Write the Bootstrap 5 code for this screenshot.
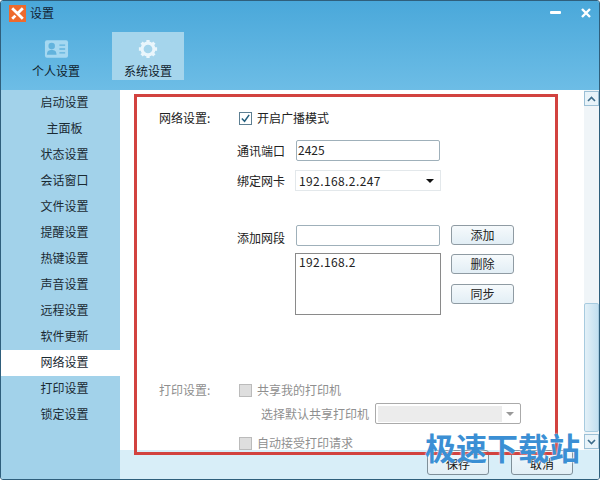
<!DOCTYPE html>
<html lang="zh">
<head>
<meta charset="utf-8">
<link href="https://cdn.jsdelivr.net/npm/bootstrap@5.3.0/dist/css/bootstrap.min.css" rel="stylesheet">
<style>
html,body{margin:0;height:480px;overflow:hidden;background:#fff}
body{font-family:"Noto Sans CJK SC","Liberation Sans",sans-serif;font-size:12px;line-height:16px;color:#222}
.win{width:600px;height:480px;border:1px solid #2f5f7c;border-radius:3px;background:#d8eef8;position:relative;overflow:hidden}
.head{height:89px;background:linear-gradient(#4aa8da,#6dbde6);flex:none}
.titlebar{height:24px;padding:0 8px;margin-bottom:7px}
.logo{width:17px;height:17px;display:block}
.wintitle{font-size:12px;color:#123}
.winbtns{gap:20px;padding-right:0}
.tabbar{padding-left:19px;gap:20px}
.tabi{width:72px;height:48px;color:#10222e;padding-top:7px}
.tabi.on{background:#a5d5ec}
.tabi svg{display:block}
.tabtxt{line-height:14px;margin-top:5px}
.bodyw{height:389px}
.side{width:119px;background:#a2d2ea;flex:none}
.sideitem{height:26px;line-height:24px;text-align:center;padding-left:8px;color:#1a2a33}
.sideitem.on{background:#fff}
.mainw{width:479px}
.pane{height:360px;background:#fff;flex:none;padding-right:15px;position:relative}
.formw{padding:20px 0 0 39px;width:462px}
.lab1{width:80px}
.lab2{width:57px;margin-left:78px;color:#222;text-align:left}
.cb{width:13px;height:13px;border:1px solid #5d7f92;background:#fff;margin-right:5px;flex:none;display:block}
.cb.dis{background:#dedede;border-color:#bbb}
.fld{border:1px solid #9fb0ba;border-radius:2px;background:#fff;height:21px;width:144px;padding:0 1px;line-height:18px;margin-left:2px}
.sel{border:1px solid #e3e8eb;height:21px;width:146px;padding:0 6px 0 3px;letter-spacing:.4px;margin-left:1px;line-height:19px}
.arrow{width:0;height:0;border-left:4px solid transparent;border-right:4px solid transparent;border-top:4px solid #111}
.lst{border:1px solid #8a8a8a;width:146px;height:62px;padding:0 3px;margin-left:1px;letter-spacing:.4px;line-height:16px;margin-top:7px}
.wbtn{width:63px;height:20px;border:1px solid #8f9ba3;border-radius:3px;background:linear-gradient(#f6fafc,#e2eef5);line-height:18px;text-align:center;color:#222;flex:none}
.btnstack{margin-left:10px;gap:10px}
.btnstack .wbtn:nth-child(2){margin-top:-1px}
.grey{color:#8f8f8f}
.sel2{border:1px solid #aaa;border-radius:2px;height:21px;width:146px;padding:2px 6px 2px 2px;margin-left:6px;background:#fff}
.sel2 i{display:block;width:124px;height:16px;background:#ececec}
.arrow.g{border-top-color:#999}
.sbar{position:absolute;top:0;right:0;width:15px;height:360px;background:#f0f5f8}
.sbtn{width:15px;height:15px;border:1px solid #9cc0d6;background:#e8f3f9;margin-top:1px}
.thumb{position:absolute;top:213px;left:0;width:15px;height:129px;background:linear-gradient(90deg,#e3f0f7,#c3e0f0);border:1px solid #a7cbdf;border-radius:2px}
.sbar .dn{position:absolute;top:343px;left:0}
.foot{height:29px;padding:0 26px 0 0;justify-content:flex-end;gap:22px;background:#d8eef8}
.fbtn{width:62px;height:25px;border:1px solid #7f8f99;border-radius:3px;background:linear-gradient(#f0f7fb,#e2eff6);text-align:center;line-height:26px;color:#111;margin-bottom:4px;overflow:hidden}
.redbox{position:absolute;left:133px;top:93px;width:424px;height:361px;border:3px solid #d2423f;pointer-events:none}
.wmark{position:absolute;left:424px;top:428px;font-size:31px;line-height:36px;font-weight:700;color:#3b8fd4;white-space:nowrap;text-shadow:0 0 2px #fff}
.fieldrow1{margin-top:14px}
.fieldrow2{margin-top:9px}
.addrow{margin-top:34px}
.addlab{margin-top:2px;height:21px;line-height:21px}
.printrow{margin-top:67px}
.printsel{margin-top:5px;margin-left:102px}
.printauto{margin-top:11px;margin-left:80px}
</style>
</head>
<body>
<div class="win d-flex flex-column">
  <div class="head">
    <div class="titlebar d-flex align-items-center justify-content-between">
      <div class="d-flex align-items-center gap-1">
        <svg class="logo" viewBox="0 0 16 16"><rect width="16" height="16" fill="#ee6a2c"/><path d="M3 3l10 10M13 3L8 8M3 13l3-3" stroke="#fff" stroke-width="2.6" fill="none"/></svg>
        <span class="wintitle">设置</span>
      </div>
      <div class="d-flex align-items-center winbtns">
        <svg width="11" height="4" viewBox="0 0 11 4"><rect width="11" height="3" rx="1" fill="#fff"/></svg>
        <svg width="10" height="10" viewBox="0 0 10 10"><path d="M1 1l8 8M9 1L1 9" stroke="#fff" stroke-width="2.4"/></svg>
      </div>
    </div>
    <div class="tabbar d-flex">
      <div class="tabi d-flex flex-column align-items-center">
        <svg width="25" height="20" viewBox="0 0 26 20"><rect x="1" y="1" width="24" height="18" rx="2" fill="#a5d8f1"/><circle cx="8" cy="7" r="3.4" fill="#62b3dd"/><path d="M3 16c0-4 2-5 5-5s5 1 5 5z" fill="#62b3dd"/><path d="M16 6h6M16 10h6M16 14h6" stroke="#62b3dd" stroke-width="1.4"/></svg>
        <div class="tabtxt">个人设置</div>
      </div>
      <div class="tabi on d-flex flex-column align-items-center">
        <svg width="20" height="20" viewBox="0 0 22 22"><circle cx="11" cy="11" r="6.5" fill="none" stroke="#eaf6fc" stroke-width="3.4"/><path d="M11 1v4M11 17v4M1 11h4M17 11h4M4 4l3 3M15 15l3 3M18 4l-3 3M7 15l-3 3" stroke="#eaf6fc" stroke-width="3.6"/></svg>
        <div class="tabtxt">系统设置</div>
      </div>
    </div>
  </div>
  <div class="bodyw d-flex">
    <div class="side">
      <div class="sideitem">启动设置</div>
      <div class="sideitem">主面板</div>
      <div class="sideitem">状态设置</div>
      <div class="sideitem">会话窗口</div>
      <div class="sideitem">文件设置</div>
      <div class="sideitem">提醒设置</div>
      <div class="sideitem">热键设置</div>
      <div class="sideitem">声音设置</div>
      <div class="sideitem">远程设置</div>
      <div class="sideitem">软件更新</div>
      <div class="sideitem on">网络设置</div>
      <div class="sideitem">打印设置</div>
      <div class="sideitem">锁定设置</div>
    </div>
    <div class="mainw d-flex flex-column">
      <div class="pane">
        <div class="formw">
          <div class="d-flex align-items-center">
            <div class="lab1">网络设置:</div>
            <svg class="cb" viewBox="0 0 12 12"><path d="M2 6l3 3 5-7" stroke="#24607f" stroke-width="1.6" fill="none"/></svg>
            <div>开启广播模式</div>
          </div>
          <div class="d-flex align-items-center fieldrow1">
            <div class="lab2">通讯端口</div>
            <div class="fld">2425</div>
          </div>
          <div class="d-flex align-items-center fieldrow2">
            <div class="lab2">绑定网卡</div>
            <div class="sel d-flex align-items-center justify-content-between"><span>192.168.2.247</span><span class="arrow"></span></div>
          </div>
          <div class="d-flex addrow">
            <div class="lab2 addlab">添加网段</div>
            <div class="d-flex flex-column">
              <div class="fld">&nbsp;</div>
              <div class="lst">192.168.2</div>
            </div>
            <div class="d-flex flex-column btnstack">
              <div class="wbtn">添加</div>
              <div class="wbtn">删除</div>
              <div class="wbtn">同步</div>
            </div>
          </div>
          <div class="d-flex align-items-center grey printrow">
            <div class="lab1">打印设置:</div>
            <span class="cb dis"></span>
            <div>共享我的打印机</div>
          </div>
          <div class="d-flex align-items-center grey printsel">
            <div>选择默认共享打印机</div>
            <div class="sel2 d-flex align-items-center justify-content-between"><i></i><span class="arrow g"></span></div>
          </div>
          <div class="d-flex align-items-center grey printauto">
            <span class="cb dis"></span>
            <div>自动接受打印请求</div>
          </div>
        </div>
        <div class="sbar">
          <div class="sbtn d-flex align-items-center justify-content-center"><svg width="9" height="6" viewBox="0 0 9 6"><path d="M1 5l3.5-3.5L8 5" stroke="#3d6c8a" stroke-width="1.6" fill="none"/></svg></div>
          <div class="thumb"></div>
          <div class="sbtn dn d-flex align-items-center justify-content-center"><svg width="9" height="6" viewBox="0 0 9 6"><path d="M1 1l3.5 3.5L8 1" stroke="#3d6c8a" stroke-width="1.6" fill="none"/></svg></div>
        </div>
      </div>
      <div class="foot d-flex align-items-end">
        <div class="fbtn">保存</div>
        <div class="fbtn">取消</div>
      </div>
    </div>
  </div>
  <div class="redbox"></div>
  <div class="wmark">极速下载站</div>
</div>
<script src="https://cdn.jsdelivr.net/npm/bootstrap@5.3.0/dist/js/bootstrap.bundle.min.js"></script>
</body>
</html>
